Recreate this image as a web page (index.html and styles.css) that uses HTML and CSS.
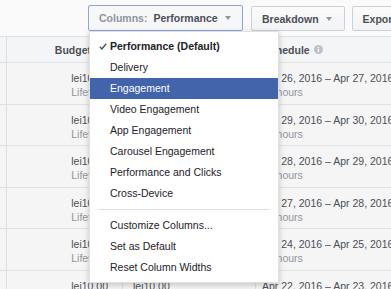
FILE: index.html
```html
<!DOCTYPE html>
<html>
<head>
<meta charset="utf-8">
<link rel="stylesheet" href="styles.css">
</head>
<body>
<div class="page">
  <div class="toolbar">
    <div class="btn btn-open"><span class="btn-label">Columns:</span><span class="btn-value">Performance</span><span class="caret"></span></div>
    <div class="btn"><span class="btn-text">Breakdown</span><span class="caret"></span></div>
    <div class="btn"><span class="btn-text">Export</span><span class="caret"></span></div>
  </div>

  <div class="table">
    <div class="row head">
      <div class="cell c0"></div>
      <div class="cell c1"><span>Budget</span><svg class="info" width="9" height="9" viewBox="0 0 9 9"><circle cx="4.5" cy="4.5" r="4.5" fill="#bec2c9"/><rect x="3.9" y="3.8" width="1.2" height="3.2" fill="#fff"/><circle cx="4.5" cy="2.5" r="0.7" fill="#fff"/></svg></div>
      <div class="cell c2"><span>Amount Spent</span></div>
      <div class="cell c3"><span>Schedule</span><svg class="info" width="9" height="9" viewBox="0 0 9 9"><circle cx="4.5" cy="4.5" r="4.5" fill="#bec2c9"/><rect x="3.9" y="3.8" width="1.2" height="3.2" fill="#fff"/><circle cx="4.5" cy="2.5" r="0.7" fill="#fff"/></svg></div>
    </div>
    <div class="row">
      <div class="cell c0"></div>
      <div class="cell c1"><div class="main">lei10.00</div><div class="sub">Lifetime</div></div>
      <div class="cell c2"><div class="main">lei10.00</div></div>
      <div class="cell c3"><div class="main">Apr 26, 2016 – Apr 27, 2016</div><div class="sub">24 hours</div></div>
    </div>
    <div class="row">
      <div class="cell c0"></div>
      <div class="cell c1"><div class="main">lei10.00</div><div class="sub">Lifetime</div></div>
      <div class="cell c2"><div class="main">lei10.00</div></div>
      <div class="cell c3"><div class="main">Apr 29, 2016 – Apr 30, 2016</div><div class="sub">24 hours</div></div>
    </div>
    <div class="row">
      <div class="cell c0"></div>
      <div class="cell c1"><div class="main">lei10.00</div><div class="sub">Lifetime</div></div>
      <div class="cell c2"><div class="main">lei10.00</div></div>
      <div class="cell c3"><div class="main">Apr 28, 2016 – Apr 29, 2016</div><div class="sub">24 hours</div></div>
    </div>
    <div class="row">
      <div class="cell c0"></div>
      <div class="cell c1"><div class="main">lei10.00</div><div class="sub">Lifetime</div></div>
      <div class="cell c2"><div class="main">lei10.00</div></div>
      <div class="cell c3"><div class="main">Apr 27, 2016 – Apr 28, 2016</div><div class="sub">24 hours</div></div>
    </div>
    <div class="row">
      <div class="cell c0"></div>
      <div class="cell c1"><div class="main">lei10.00</div><div class="sub">Lifetime</div></div>
      <div class="cell c2"><div class="main">lei10.00</div></div>
      <div class="cell c3"><div class="main">Apr 24, 2016 – Apr 25, 2016</div><div class="sub">24 hours</div></div>
    </div>
    <div class="row">
      <div class="cell c0"></div>
      <div class="cell c1"><div class="main">lei10.00</div><div class="sub">Lifetime</div></div>
      <div class="cell c2"><div class="main">lei10.00</div></div>
      <div class="cell c3"><div class="main">Apr 22, 2016 – Apr 23, 2016</div><div class="sub">24 hours</div></div>
    </div>
  </div>

  <div class="menu">
    <div class="item selected"><svg class="check" width="8" height="7" viewBox="0 0 8 7"><path d="M0.8 3.8 L2.9 5.9 L7.2 0.8" fill="none" stroke="#4b4f56" stroke-width="1.4"/></svg>Performance (Default)</div>
    <div class="item">Delivery</div>
    <div class="item hover">Engagement</div>
    <div class="item">Video Engagement</div>
    <div class="item">App Engagement</div>
    <div class="item">Carousel Engagement</div>
    <div class="item">Performance and Clicks</div>
    <div class="item">Cross-Device</div>
    <div class="sep"></div>
    <div class="item">Customize Columns...</div>
    <div class="item">Set as Default</div>
    <div class="item">Reset Column Widths</div>
  </div>
</div>
</body>
</html>
```

FILE: styles.css
```css
html, body {
  margin: 0;
  padding: 0;
}
body {
  width: 391px;
  height: 289px;
  overflow: hidden;
  background: #fafafa;
  font-family: "Liberation Sans", Arial, sans-serif;
  font-size: 10.5px;
  color: #1d2129;
}
.page {
  position: relative;
  width: 391px;
  height: 289px;
  overflow: hidden;
}
.toolbar {
  height: 36px;
  box-sizing: border-box;
  padding: 5px 0 0 88px;
  display: flex;
  align-items: flex-start;
  gap: 7px;
  white-space: nowrap;
}
.btn {
  flex: none;
  height: 25px;
  margin-top: 1px;
  box-sizing: border-box;
  padding: 0 12px 0 10px;
  display: flex;
  align-items: center;
  border: 1px solid #ced0d4;
  border-radius: 2px;
  background: linear-gradient(#fbfbfc, #f2f3f5);
  font-weight: bold;
  color: #4b4f56;
}
.btn-open {
  height: 26px;
  margin-top: 0;
  margin-right: 1px;
  width: 155px;
  padding-left: 10px;
  border-color: #8fa4d8;
  background: #f6f7f9;
}
.btn-label {
  color: #90949c;
}
.btn-value {
  margin-left: 6px;
  color: #4b4f56;
}
.caret {
  width: 0;
  height: 0;
  margin-left: 7px;
  border-left: 3px solid transparent;
  border-right: 3px solid transparent;
  border-top: 4px solid #90949c;
}
.table {
  width: 600px;
}
.row {
  display: grid;
  grid-template-columns: 7px 116px 133px 340px;
  height: 41.6px;
  box-sizing: border-box;
  border-bottom: 1px solid #dddfe2;
  background: #f5f5f6;
  white-space: nowrap;
}
.row.head {
  height: 27px;
  border-top: 1px solid #dddfe2;
  background: #f4f5f6;
  font-weight: bold;
  color: #4b4f56;
}
.cell {
  box-sizing: border-box;
  border-right: 1px solid #dddfe2;
  overflow: hidden;
  padding-top: 8px;
  line-height: 14px;
}
.head .cell {
  padding-top: 0;
  display: flex;
  align-items: center;
  gap: 4px;
}
.c1 {
  text-align: right;
  padding-right: 14px;
}
.head .c1 {
  justify-content: flex-end;
  padding-right: 18px;
}
.c2 {
  padding-left: 10px;
}
.c3 {
  padding-left: 6px;
  border-right: none;
}
.head .c3 {
  padding-left: 7px;
}
.info {
  flex: none;
  display: block;
}
.main {
  color: #4b4f56;
}
.sub {
  color: #90949c;
}
.menu {
  position: absolute;
  left: 89px;
  top: 31px;
  width: 190px;
  box-sizing: border-box;
  padding: 4px 0;
  background: #fff;
  border: 1px solid rgba(0, 0, 0, 0.12);
  box-shadow: 0 2px 6px rgba(0, 0, 0, 0.2);
  white-space: nowrap;
}
.item {
  position: relative;
  height: 21px;
  line-height: 21px;
  padding-left: 20px;
  color: #1d2129;
}
.item.selected {
  font-weight: bold;
}
.item.hover {
  background: #4264ab;
  color: #fff;
}
.check {
  position: absolute;
  left: 9px;
  top: 7px;
}
.sep {
  height: 1px;
  margin: 5px 8px;
  background: #dddfe2;
}
```
